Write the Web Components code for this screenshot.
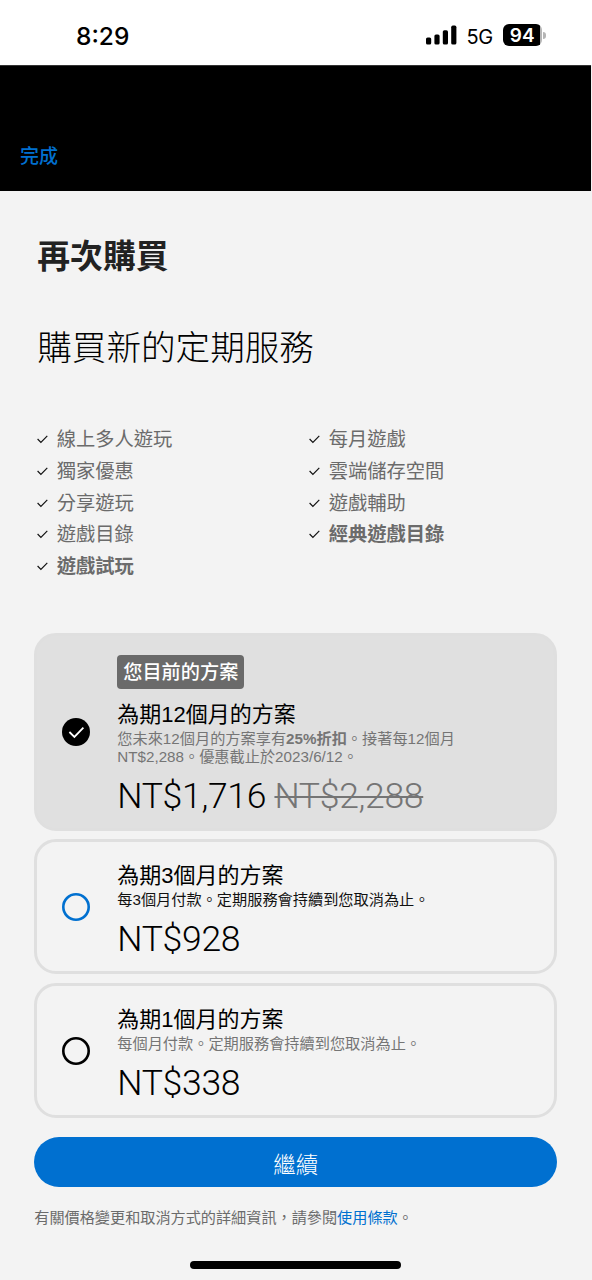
<!DOCTYPE html>
<html lang="zh-Hant">
<head>
<meta charset="utf-8">
<title>再次購買</title>
<style>
html,body{margin:0;padding:0;background:#f3f3f3}
body{width:592px;height:1280px;overflow:hidden;font-family:"Liberation Sans","Noto Sans CJK TC",sans-serif;color:#000}
</style>
</head>
<body>
<subscription-page></subscription-page>
<script>
const define = (name, html, setup) => customElements.define(name, class extends HTMLElement {
  constructor() {
    super();
    const t = document.createElement('template');
    t.innerHTML = html;
    this.attachShadow({mode: 'open'}).appendChild(t.content.cloneNode(true));
  }
  connectedCallback() { if (setup) setup(this, this.shadowRoot); }
});

define('status-bar', `
<style>
:host{display:flex;box-sizing:border-box;height:65px;background:#fff;align-items:flex-start;font-family:Inter,sans-serif;padding:20px 46.5px 0 76px}
.time{font-size:24.5px;font-weight:500;line-height:32px;letter-spacing:0}
.right{margin-left:auto;display:flex;align-items:center;height:30px}
.bars{display:block;margin-right:9.5px}
.net{font-size:20px;letter-spacing:-.3px;line-height:30px;margin-right:10px;padding-top:3px}
.bat{width:38.5px;height:22px;border-radius:6px;background:linear-gradient(90deg,#000 37px,#b5b5b5 37px);color:#fff;font-size:19px;font-weight:600;line-height:23px;text-align:center}
.cap{width:2.5px;height:7px;border-radius:0 3px 3px 0;background:#b5b5b5;margin-left:1.5px}
</style>
<span class="time">8:29</span>
<div class="right">
<svg class="bars" width="31" height="20" viewBox="0 0 31 20"><rect x="0" y="12.5" width="5.2" height="7" rx="1.6"/><rect x="8.4" y="9.4" width="5.2" height="10.1" rx="1.6"/><rect x="16.8" y="5.2" width="5.2" height="14.3" rx="1.6"/><rect x="25.2" y="0.6" width="5.2" height="18.9" rx="1.6"/></svg>
<span class="net">5G</span><span class="bat">94</span><span class="cap"></span>
</div>`);

define('nav-bar', `
<style>
:host{display:block;box-sizing:border-box;height:126px;background:#000;border-top:1px solid #333;padding:77px 20px 0;color:#0070d0;font-size:19px;font-weight:500;line-height:28px;margin-right:1px}
</style><slot></slot>`);

define('feature-item', `
<style>
:host{display:flex;align-items:center;height:31.8px;font-size:19.25px;line-height:31.8px;color:#6b6b6b;font-weight:400;white-space:nowrap}
:host([strong]){font-weight:700}
svg{flex:none;width:11px;height:10px;margin:0 8.5px 0 -.5px;position:relative;top:-.8px}
</style>
<svg viewBox="0 0 11 10" fill="none" stroke="#111" stroke-width="1.2"><path d="M.6 5 3.9 8.3 10.3 1.8"/></svg><span><slot></slot></span>`);

define('feature-list', `
<style>
:host{display:grid;grid-template-columns:272px auto;align-items:start}
</style><div><slot name="left"></slot></div><div><slot name="right"></slot></div>`);

define('radio-mark', `
<style>:host{display:block;width:28px;height:28px}svg{display:block}.on,.off{display:none}
:host([checked]) .on{display:block}:host(:not([checked])) .off{display:block}</style>
<svg class="on" width="28" height="28" viewBox="0 0 28 28"><circle cx="14" cy="14" r="14"/><path d="M7.4 14 12.4 18.9 21.4 9.7" fill="none" stroke="#fff" stroke-width="1.8"/></svg>
<svg class="off" width="28" height="28" viewBox="0 0 28 28"><circle cx="14" cy="14" r="12.7" fill="none" stroke="currentColor" stroke-width="2.6"/></svg>`);

define('plan-card', `
<style>
:host{display:flex;box-sizing:border-box;align-items:center;width:523px;height:135px;border:3px solid #dfdfdf;border-radius:22px;padding-left:24.5px;margin-bottom:8.8px;color:#000}
:host([current]){height:197.5px;background:#e0e0e0}
radio-mark{margin-right:27.5px;flex:none}
:host([focus]) radio-mark{color:#0070d0}
.body{width:360px;padding-top:6.5px}
.badge{display:none;width:127px;height:34px;border-radius:4px;background:#6a6a6a;color:#fff;font-size:19.2px;font-weight:500;line-height:35px;text-align:center;margin-bottom:11px;white-space:nowrap}
:host([current]) .badge{display:block}
.title{font-size:22px;line-height:30px;height:30px;white-space:nowrap}
.desc{font-size:15.2px;line-height:18px;color:#757575;white-space:nowrap}
:host([focus]) .desc{color:#111}
.price{font-family:Roboto,sans-serif;font-weight:300;font-size:35.5px;line-height:42px;margin:9px 0 -1px;white-space:nowrap;letter-spacing:-.3px}
</style>
<radio-mark></radio-mark>
<div class="body"><div class="badge">您目前的方案</div><div class="title"><slot name="title"></slot></div><div class="desc"><slot name="desc"></slot></div><div class="price"><slot name="price"></slot></div></div>`,
(el, root) => { if (el.hasAttribute('current')) root.querySelector('radio-mark').setAttribute('checked', ''); });

define('primary-button', `
<style>:host{display:block;width:523px;height:50px;border-radius:25px;background:#0070d0;color:#fff;font-size:22.5px;font-weight:300;line-height:58px;text-align:center}</style><slot></slot>`);

define('home-indicator', `<style>:host{display:block;width:211px;height:7.5px;border-radius:4px;background:#000}</style>`);

define('subscription-page', `
<style>
:host{display:block;width:592px;height:1280px}
main{display:block;padding-left:34.3px}
h1,h2{margin:0 0 0 3px;white-space:nowrap}
h1{padding-top:41px;font-size:32.8px;line-height:50px;font-weight:700;color:#222}
h2{padding-top:41px;font-size:34.6px;line-height:50px;font-weight:300}
feature-list{margin:51px 0 0 3.4px;height:209px}
s{color:#757575;text-decoration-thickness:2px}
.terms{font-size:15.15px;line-height:22px;color:#6b6b6b;margin-top:20px;white-space:nowrap}
.terms a{color:#0070d0}
home-indicator{margin:32px 0 0 156px}
</style>
<status-bar></status-bar>
<nav-bar>完成</nav-bar>
<main>
<h1>再次購買</h1>
<h2>購買新的定期服務</h2>
<feature-list>
<feature-item slot="left">線上多人遊玩</feature-item>
<feature-item slot="left">獨家優惠</feature-item>
<feature-item slot="left">分享遊玩</feature-item>
<feature-item slot="left">遊戲目錄</feature-item>
<feature-item slot="left" strong>遊戲試玩</feature-item>
<feature-item slot="right">每月遊戲</feature-item>
<feature-item slot="right">雲端儲存空間</feature-item>
<feature-item slot="right">遊戲輔助</feature-item>
<feature-item slot="right" strong>經典遊戲目錄</feature-item>
</feature-list>
<plan-card current><span slot="title">為期12個月的方案</span><span slot="desc">您未來12個月的方案享有<b>25%折扣</b>。接著每12個月<br>NT$2,288。優惠截止於2023/6/12。</span><span slot="price">NT$1,716 <s>NT$2,288</s></span></plan-card>
<plan-card focus><span slot="title">為期3個月的方案</span><span slot="desc">每3個月付款。定期服務會持續到您取消為止。</span><span slot="price">NT$928</span></plan-card>
<plan-card><span slot="title">為期1個月的方案</span><span slot="desc">每個月付款。定期服務會持續到您取消為止。</span><span slot="price">NT$338</span></plan-card>
<primary-button style="margin-top:19.3px">繼續</primary-button>
<div class="terms">有關價格變更和取消方式的詳細資訊，請參閱<a>使用條款</a>。</div>
<home-indicator></home-indicator>
</main>`);
</script>
</body>
</html>
